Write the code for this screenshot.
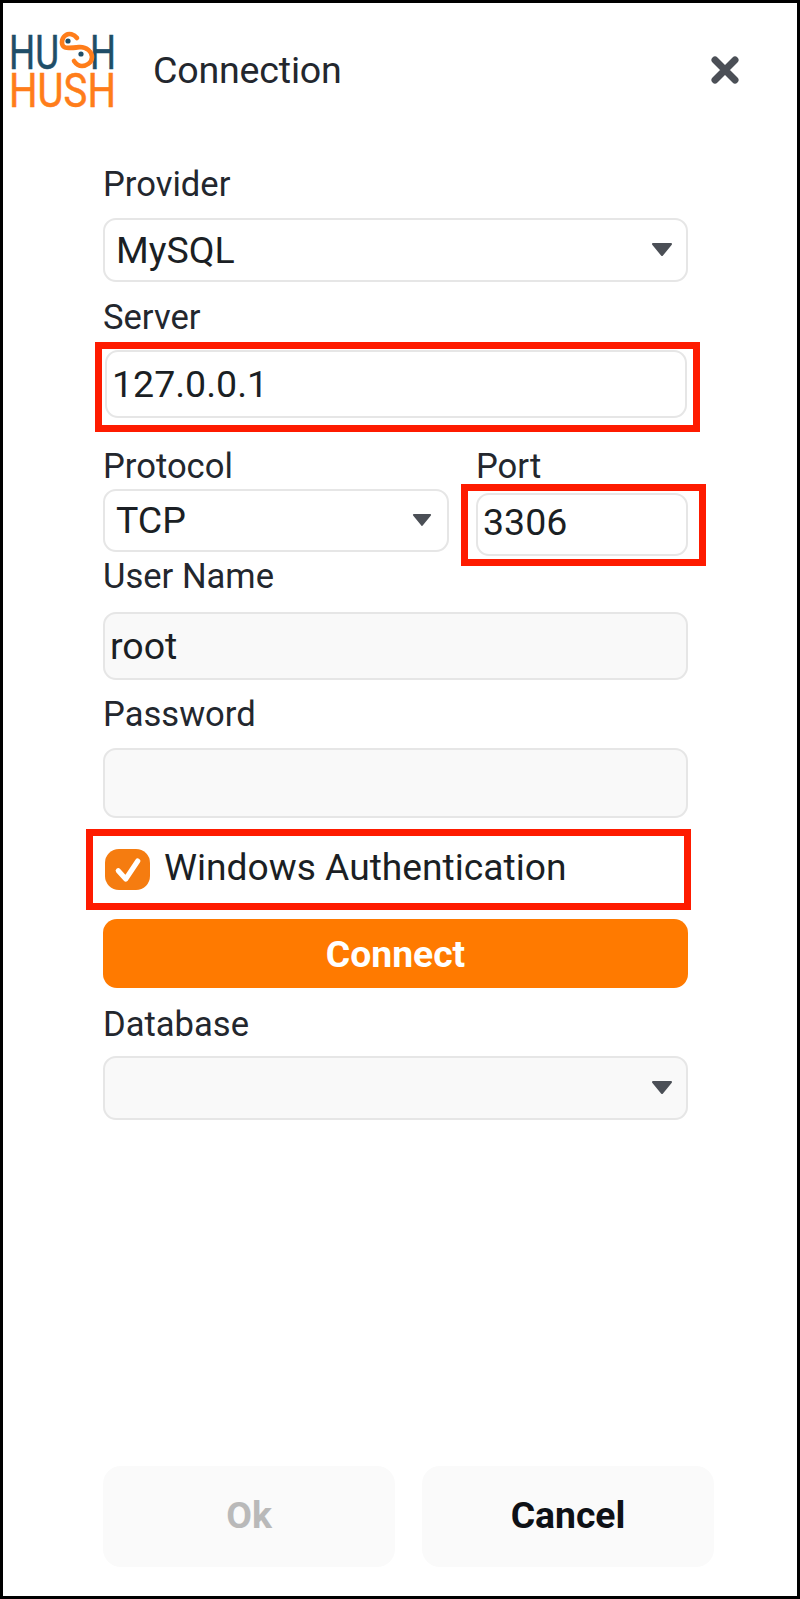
<div class="frame">
  <header class="head">
    <svg class="logo" viewBox="11 33 104 76" aria-label="Hush Hush logo">
      <text class="navy" x="9" y="69" textLength="50" lengthAdjust="spacingAndGlyphs">HU</text>
      <text class="navy" x="90" y="69" textLength="26" lengthAdjust="spacingAndGlyphs">H</text>
      <text class="amber" x="9" y="107" textLength="107" lengthAdjust="spacingAndGlyphs">HUSH</text>
      <path class="curl" d="M77 38C74 34 69 33 66 35C62 37 61 43 63 46C65 49 72 48 80 47C87 47 92 52 92 57C92 63 86 66 82 66C79 66 76 64 74 61" />
      <circle cx="68" cy="41" r="2.6" fill="#1f4e68" />
      <circle cx="81" cy="54" r="2.6" fill="#1f4e68" />
    </svg>
    <h1>Connection</h1>
    <svg class="close" viewBox="0 0 28 28" aria-label="Close">
      <path d="M4 4L24 24M24 4L4 24" />
    </svg>
  </header>

  <main class="form">
    <div class="label prov">Provider</div>
    <div class="field select">
      <span>MySQL</span>
      <svg class="arrow" viewBox="0 0 22 15"><path d="M2 2H20L11 13Z" /></svg>
    </div>

    <div class="label srv">Server</div>
    <div class="field plain mark server"><span>127.0.0.1</span></div>

    <div class="pair">
      <div class="col-left">
        <div class="label tight">Protocol</div>
        <div class="field select">
          <span>TCP</span>
          <svg class="arrow small" viewBox="0 0 22 15"><path d="M2 2H20L11 13Z" /></svg>
        </div>
      </div>
      <div class="col-right">
        <div class="label tight">Port</div>
        <div class="field plain mark port"><span>3306</span></div>
      </div>
    </div>

    <div class="label user">User Name</div>
    <div class="field plain filled tall"><span>root</span></div>

    <div class="label pass">Password</div>
    <div class="field plain filled tall secret"></div>

    <div class="check mark">
      <span class="box">
        <svg viewBox="0 0 24 24"><path d="M5.5 12.5L10.5 18L18.5 6" /></svg>
      </span>
      <span class="check-text">Windows Authentication</span>
    </div>

    <button class="connect">Connect</button>

    <div class="label db">Database</div>
    <div class="field select filled">
      <svg class="arrow" viewBox="0 0 22 15"><path d="M2 2H20L11 13Z" /></svg>
    </div>
  </main>

  <footer class="foot">
    <button class="action off">Ok</button>
    <button class="action">Cancel</button>
  </footer>
</div>

<style>
  :global(body) {
    margin: 0;
    background: #fff;
  }

  .frame {
    box-sizing: border-box;
    width: 800px;
    height: 1599px;
    border: 3px solid #000;
    background: #fff;
    display: flex;
    flex-direction: column;
    font-family: Roboto, "Liberation Sans", sans-serif;
    color: #23272e;
  }

  .head {
    height: 160px;
    flex: none;
    display: flex;
    align-items: flex-start;
    padding-left: 8px;
    padding-top: 30px;
    box-sizing: border-box;
  }

  .logo {
    width: 104px;
    height: 76px;
    flex: none;
    overflow: visible;
  }

  .logo text {
    font-family: Roboto, sans-serif;
    font-size: 49px;
    font-weight: 400;
  }

  .navy { fill: #1f4e68; stroke: #1f4e68; stroke-width: 0.5; }
  .amber { fill: #ff7d1a; stroke: #ff7d1a; stroke-width: 0.5; }

  .curl {
    fill: none;
    stroke: #ff7d1a;
    stroke-width: 4.6;
    stroke-linecap: round;
  }

  h1 {
    margin: 0 0 0 38px;
    font-size: 37.6px;
    line-height: 74px;
    font-weight: 400;
    letter-spacing: -0.2px;
  }

  .close {
    width: 28px;
    height: 28px;
    margin-left: auto;
    margin-right: 58px;
    margin-top: 23px;
    flex: none;
  }

  .close path {
    fill: none;
    stroke: #4b4f56;
    stroke-width: 7;
    stroke-linecap: round;
  }

  .form {
    width: 585px;
    margin-left: 100px;
    flex: 1;
  }

  .label {
    height: 40px;
    line-height: 40px;
    font-size: 34.6px;
    margin-bottom: 15px;
  }

  .label.prov {
    line-height: 43px;
  }

  .label.srv {
    margin-bottom: 13px;
  }

  .label.tight {
    margin-bottom: 4px;
    line-height: 42px;
  }

  .label.user {
    line-height: 38px;
  }

  .label.pass {
    margin-bottom: 14px;
    line-height: 40px;
  }

  .label.db {
    margin-top: 15px;
    margin-bottom: 13px;
    line-height: 42px;
  }

  .field {
    box-sizing: border-box;
    height: 64px;
    border: 2px solid #e6e6e6;
    border-radius: 13px;
    display: flex;
    align-items: center;
    font-size: 37.5px;
    color: #1b1f24;
    margin-bottom: 15px;
    position: relative;
    background: #fff;
  }

  .select {
    padding: 0 13px 0 11px;
    justify-content: space-between;
  }

  .select.filled {
    justify-content: flex-end;
    background: #f9f9f9;
    height: 64px;
    margin-bottom: 0;
  }

  .plain {
    padding-left: 5px;
  }

  .tall {
    height: 68px;
    margin-bottom: 14px;
  }

  .secret {
    height: 70px;
    margin-bottom: 0;
  }

  .filled {
    background: #f9f9f9;
  }

  .server {
    width: 582px;
    height: 68px;
    margin-left: 2px;
    margin-bottom: 27px;
    padding-bottom: 1px;
  }

  .pair {
    display: flex;
    align-items: flex-start;
  }

  .col-left {
    width: 346px;
    flex: none;
  }

  .col-right {
    width: 212px;
    margin-left: 27px;
    flex: none;
  }

  .col-left .field {
    height: 63px;
    margin-bottom: 5px;
    padding-bottom: 1px;
  }

  .col-right .label {
    margin-bottom: 8px;
  }

  .port {
    height: 63px;
    margin-bottom: 0;
    padding-bottom: 5px;
  }

  .arrow {
    width: 22px;
    height: 15px;
    margin-top: -1px;
    flex: none;
  }

  .arrow path {
    fill: #4b4f56;
    stroke: #4b4f56;
    stroke-width: 2;
    stroke-linejoin: round;
  }

  .arrow.small {
    width: 20px;
    height: 14px;
    margin-right: 2px;
  }

  .mark {
    position: relative;
  }

  .mark::after {
    content: "";
    position: absolute;
    border: 7px solid #fe1b00;
    pointer-events: none;
  }

  .server::after {
    inset: -10px -15px -16px -12px;
  }

  .port::after {
    inset: -11px -20px -12px -17px;
  }

  .check {
    height: 41px;
    margin-top: 31px;
    display: flex;
    align-items: center;
    font-size: 37.2px;
    color: #1b1f24;
  }

  .check-text {
    padding-bottom: 6px;
  }

  .check::after {
    inset: -20px -3px -20px -17px;
  }

  .box {
    width: 45px;
    height: 41px;
    margin-left: 2px;
    margin-right: 14px;
    border-radius: 14px;
    background: #f57c10;
    display: flex;
    align-items: center;
    justify-content: center;
    flex: none;
  }

  .box svg {
    width: 36px;
    height: 36px;
  }

  .box path {
    fill: none;
    stroke: #fff;
    stroke-width: 3.4;
    stroke-linecap: round;
    stroke-linejoin: round;
  }

  .connect {
    display: block;
    width: 585px;
    height: 69px;
    margin-top: 29px;
    border: 0;
    border-radius: 14px;
    background: #ff7a00;
    color: #fff;
    font-family: inherit;
    font-size: 37.3px;
    font-weight: 700;
    padding: 0;
  }

  .foot {
    flex: none;
    display: flex;
    gap: 27px;
    margin-left: 100px;
    padding-bottom: 29px;
  }

  .action {
    width: 292px;
    height: 101px;
    border: 0;
    border-radius: 18px;
    background: #fafafa;
    color: #0e1116;
    font-family: inherit;
    font-size: 37.3px;
    font-weight: 700;
    padding: 0 0 4px;
  }

  .action.off {
    color: #b9b9b9;
  }
</style>
